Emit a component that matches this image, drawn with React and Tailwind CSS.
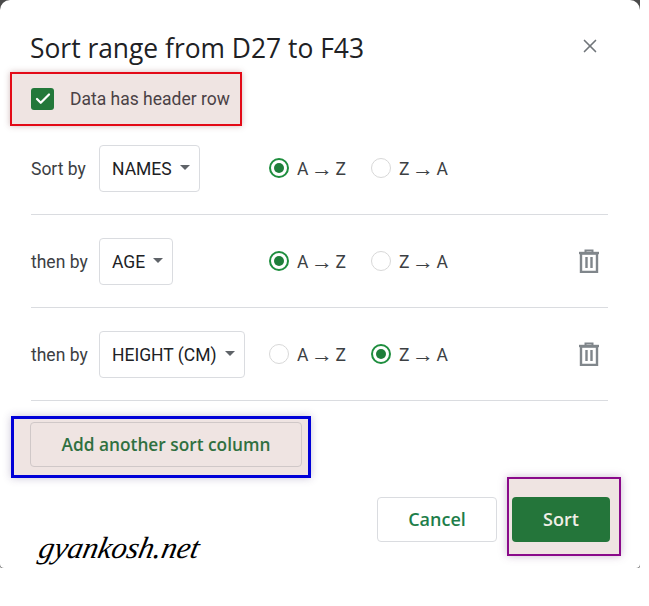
import React from 'react';
import { X, Check } from 'lucide-react';

const sans = "font-['Roboto',sans-serif]";
const title = "font-['Open_Sans',sans-serif]";

const rows = [
  { label: 'Sort by', column: 'NAMES', order: 'az', removable: false },
  { label: 'then by', column: 'AGE', order: 'az', removable: true },
  { label: 'then by', column: 'HEIGHT (CM)', order: 'za', removable: true },
];

function Radio({ on, from, to }) {
  return (
    <div className="flex items-center gap-[8px]">
      <span className={`w-[20px] h-[20px] rounded-full flex items-center justify-center ${on ? 'border-2 border-[#1e8e3e]' : 'border-[1.5px] border-[#d8d8d8]'}`}>
        {on && <span className="w-[10px] h-[10px] rounded-full bg-[#1e7e3a]" />}
      </span>
      <span className="w-[49px] flex justify-between items-center text-[17.5px] leading-[24px] pt-[2px] text-[#3c4043] whitespace-nowrap">
        {from}
        <span className="font-['Liberation_Sans',sans-serif] text-[22px] leading-[24px]">→</span>
        {to}
      </span>
    </div>
  );
}

function TrashIcon() {
  return (
    <svg width="22" height="24" viewBox="0 0 22 24" fill="none" className="text-[#80868b]">
      <path d="M1 4h20" stroke="currentColor" strokeWidth="2.4" />
      <path d="M7.5 3V1.4h7V3" stroke="currentColor" strokeWidth="2" />
      <path d="M3 4.5h16V23H3z" stroke="currentColor" strokeWidth="2.4" />
      <path d="M8.5 8v11M13.5 8v11" stroke="currentColor" strokeWidth="2.4" />
    </svg>
  );
}

function SortRow({ label, column, order, removable }) {
  return (
    <div className="h-[93px] flex items-center border-b border-[#dadce0]">
      <div className="w-[238px] flex items-center shrink-0">
        <span className="w-[68px] pt-[2px] text-[17.5px] text-[#3c4043]">{label}</span>
        <div className="h-[47px] pl-[12px] pr-[9px] flex items-center gap-[8px] border border-[#dadce0] rounded-[4px]">
          <span className="pt-[2px] text-[17.5px] text-[#202124] whitespace-nowrap">{column}</span>
          <span className="w-0 h-0 border-x-[5px] border-x-transparent border-t-[5px] border-t-[#5f6368] -mt-[2px]" />
        </div>
      </div>
      <div className="flex items-center gap-[25px]">
        <Radio on={order === 'az'} from="A" to="Z" />
        <Radio on={order === 'za'} from="Z" to="A" />
      </div>
      {removable && <div className="ml-auto mr-[8px] flex"><TrashIcon /></div>}
    </div>
  );
}

export default function App() {
  return (
    <div className={`w-[649px] h-[606px] bg-white overflow-hidden ${sans}`}>
      <div className="w-[640px] h-[568px] bg-[#4a4a4a] rounded-b-[2px]">
        <div className="relative w-full h-full bg-white rounded-t-[10px] rounded-b-[4px] pl-[31px] pr-[32px]">
          <header className="h-[72px] pt-[28px] flex items-start justify-between">
            <h1 className={`-ml-[1px] text-[26.4px] leading-[40px] text-[#202124] whitespace-nowrap ${title}`}>Sort range from D27 to F43</h1>
            <X size={22} strokeWidth={1.8} className="text-[#70757a] mt-[7px] mr-[7px]" />
          </header>

          <div className="-ml-[21px] w-[232px] h-[54px] flex items-center pl-[19px] border-2 border-[#e30a17] bg-[#efe4e2] shadow-[0_0_6px_rgba(120,60,60,0.35)]">
            <span className="w-[23px] h-[22px] rounded-[3px] bg-[#23783a] flex items-center justify-center">
              <Check size={18} strokeWidth={3} className="text-white" />
            </span>
            <span className="ml-[16px] text-[17.5px] text-[#4a4145] whitespace-nowrap">Data has header row</span>
          </div>

          <div className="mt-[-4px]">
            {rows.map((row, i) => (
              <SortRow key={i} {...row} />
            ))}
          </div>

          <div className="-ml-[20px] mt-[15px] w-[300px] h-[62px] pl-[16px] flex items-center border-[3px] border-[#0000d8] bg-[#efe4e2] shadow-[0_0_8px_rgba(80,60,120,0.3)]">
            <div className={`w-[272px] h-[45px] -mt-[5px] flex items-center justify-center rounded-[4px] border border-[#d0c8c8] text-[17.3px] font-semibold text-[#2f7040] ${title}`}>
              Add another sort column
            </div>
          </div>

          <div className="absolute right-[19px] top-[477px] flex items-center">
            <div className={`w-[120px] h-[45px] mt-[6px] flex items-center justify-center border border-[#dadce0] rounded-[4px] text-[18px] font-semibold text-[#1e7e4a] ${title}`}>
              Cancel
            </div>
            <div className="ml-[10px] w-[114px] h-[79px] border-[2px] border-[#8a0a8a] bg-[#efe4e2] shadow-[0_0_8px_rgba(110,60,120,0.35)] pl-[3px] pt-[18px]">
              <div className={`w-[98px] h-[45px] flex items-center justify-center rounded-[4px] bg-[#24753a] text-[18px] font-semibold text-[#f1efe6] ${title}`}>
                Sort
              </div>
            </div>
          </div>

          <div className="absolute left-[35px] top-[528px] text-[30.5px] leading-[40px] italic -skew-x-12 origin-bottom-left text-black whitespace-nowrap font-['Liberation_Serif',serif]">
            gyankosh.net
          </div>
        </div>
      </div>
    </div>
  );
}
